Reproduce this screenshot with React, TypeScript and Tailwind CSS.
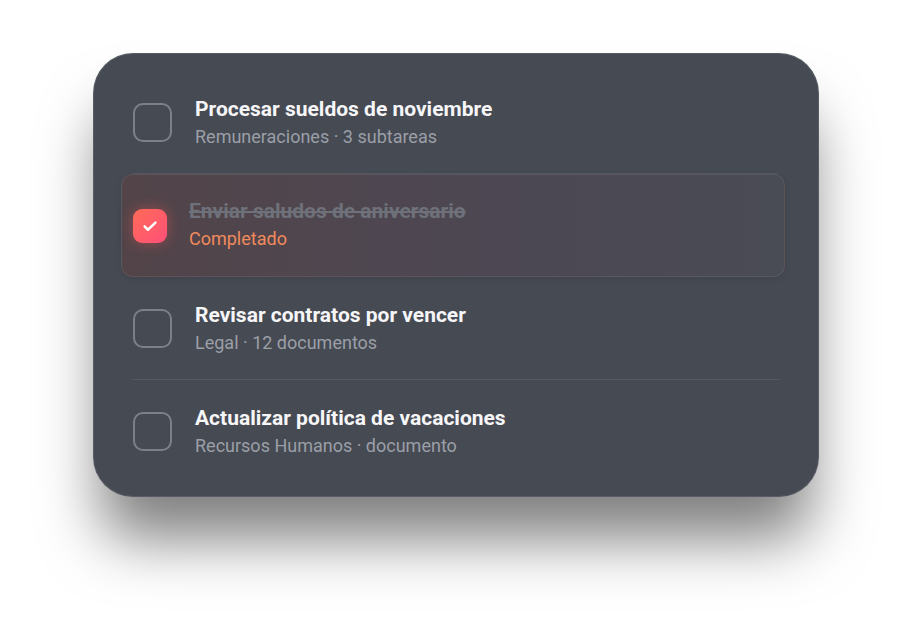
import React from 'react';

type Task = {
  title: string;
  meta: string;
  done?: boolean;
};

const tasks: Task[] = [
  { title: 'Procesar sueldos de noviembre', meta: 'Remuneraciones · 3 subtareas' },
  { title: 'Enviar saludos de aniversario', meta: 'Completado', done: true },
  { title: 'Revisar contratos por vencer', meta: 'Legal · 12 documentos' },
  { title: 'Actualizar política de vacaciones', meta: 'Recursos Humanos · documento' },
];

function CheckIcon() {
  return (
    <svg viewBox="0 0 24 24" className="w-[20px] h-[20px]" fill="none" stroke="white" strokeWidth={3} strokeLinecap="round" strokeLinejoin="round">
      <path d="M5.5 12.5l4 4L18.5 8" />
    </svg>
  );
}

function TaskRow({ task, last }: { task: Task; last: boolean }) {
  if (task.done) {
    return (
      <div className="h-[103px] -ml-[12px] -mr-[6px] pl-[11px] flex items-center rounded-[12px] border border-white/[0.08] bg-gradient-to-r from-[#524449] via-[#4d4752] to-[#494b55] shadow-[0_2px_6px_rgba(0,0,0,0.1)]">
        <div className="w-[34px] h-[34px] rounded-[9px] bg-gradient-to-br from-[#ff6a55] to-[#ff4f78] flex items-center justify-center shadow-[0_0_14px_rgba(255,90,90,0.4)]">
          <CheckIcon />
        </div>
        <div className="ml-[22px] -mt-[2px] flex flex-col">
          <span className="text-[21px] leading-[28px] font-bold text-[#6e7179] line-through decoration-[#6e7179]">{task.title}</span>
          <span className="text-[18px] leading-[28px] text-[#f08a5c]">{task.meta}</span>
        </div>
      </div>
    );
  }
  return (
    <div className={`h-[103px] flex items-center ${last ? '' : 'border-b border-white/[0.08]'}`}>
      <div className="w-[39px] h-[39px] rounded-[10px] border-2 border-[#7c8089]" />
      <div className="ml-[23px] flex flex-col">
        <span className="text-[21px] leading-[28px] font-bold text-[#f6f6f8]">{task.title}</span>
        <span className="text-[18px] leading-[27px] text-[#9b9fa7]">{task.meta}</span>
      </div>
    </div>
  );
}

export default function App() {
  return (
    <div className="w-[912px] h-[630px] bg-white overflow-hidden" style={{ fontFamily: "Roboto, 'Noto Sans', sans-serif" }}>
      <div className="mx-auto mt-[53px] w-[726px] h-[444px] rounded-[40px] bg-[#464a53] border border-white/[0.1] shadow-[0_50px_60px_-8px_rgba(0,0,0,0.5)] px-[39px] pt-[17px]">
        {tasks.map((task, idx) => (
          <TaskRow key={idx} task={task} last={idx === tasks.length - 1} />
        ))}
      </div>
    </div>
  );
}
